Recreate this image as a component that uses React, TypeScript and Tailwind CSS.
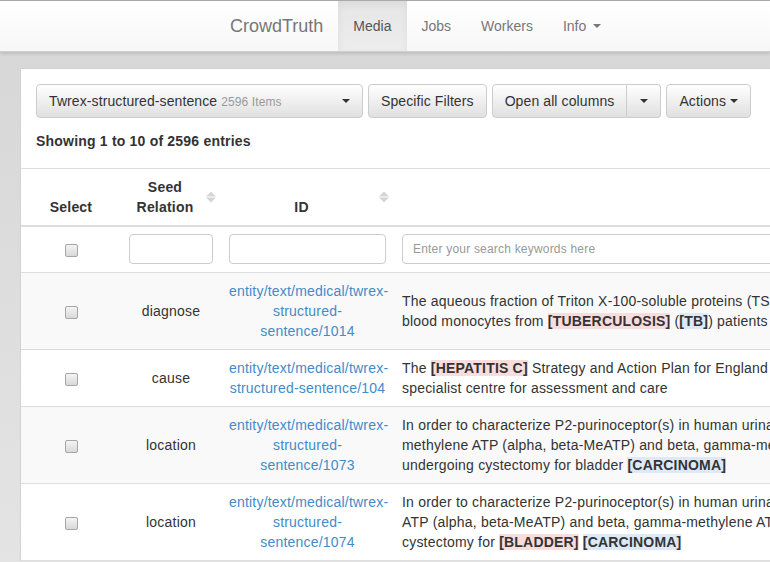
import React from "react";

const font = { fontFamily: '"Liberation Sans", Arial, sans-serif' };

function Caret() {
  return (
    <span className="inline-block w-0 h-0 border-x-[4px] border-t-[4px] border-x-transparent border-t-[#333] align-middle" />
  );
}

function Check() {
  return (
    <span className="inline-block w-[13px] h-[13px] rounded-[2px] border border-[#a6a6a6] bg-gradient-to-b from-[#f4f4f4] to-[#d8d8d8] align-middle" />
  );
}

function SortIcon() {
  return (
    <span className="absolute right-[5px] top-1/2 -translate-y-1/2 flex flex-col items-center gap-[1px]">
      <span className="w-0 h-0 border-x-[5px] border-b-[5px] border-x-transparent border-b-[#d5d5d5]" />
      <span className="w-0 h-0 border-x-[5px] border-t-[5px] border-x-transparent border-t-[#d5d5d5]" />
    </span>
  );
}

function Red({ children }: { children: React.ReactNode }) {
  return <b className="bg-[#f9dcdc] text-[#333]">{children}</b>;
}

function Blue({ children }: { children: React.ReactNode }) {
  return <b className="bg-[#dde9f8] text-[#333]">{children}</b>;
}

const btn =
  "h-[34px] px-3 border border-[#ccc] rounded-[4px] bg-gradient-to-b from-white to-[#e0e0e0] text-[14px] tracking-[0.1px] text-[#333] flex items-center shadow-[0_1px_0_rgba(255,255,255,0.15)]";

export default function App() {
  const rows = [
    {
      rel: "diagnose",
      id: ["entity/text/medical/twrex-", "structured-", "sentence/1014"],
      text: [
        <>The aqueous fraction of Triton X-100-soluble proteins (TSP) from peripheral human</>,
        <>
          blood monocytes from <Red>[TUBERCULOSIS]</Red> (<Blue>[TB]</Blue>) patients and healthy
          controls
        </>,
      ],
    },
    {
      rel: "cause",
      id: ["entity/text/medical/twrex-", "structured-sentence/104"],
      text: [
        <>
          The <Red>[HEPATITIS C]</Red> Strategy and Action Plan for England recommends referral to a
        </>,
        <>specialist centre for assessment and care</>,
      ],
    },
    {
      rel: "location",
      id: ["entity/text/medical/twrex-", "structured-", "sentence/1073"],
      text: [
        <>In order to characterize P2-purinoceptor(s) in human urinary bladder, the effects of alpha, beta-</>,
        <>methylene ATP (alpha, beta-MeATP) and beta, gamma-methylene ATP were studied in patients</>,
        <>
          undergoing cystectomy for bladder <Blue>[CARCINOMA]</Blue>
        </>,
      ],
    },
    {
      rel: "location",
      id: ["entity/text/medical/twrex-", "structured-", "sentence/1074"],
      text: [
        <>In order to characterize P2-purinoceptor(s) in human urinary bladder, the effects of alpha, beta-methylene</>,
        <>ATP (alpha, beta-MeATP) and beta, gamma-methylene ATP were studied in patients undergoing</>,
        <>
          cystectomy for <Red>[BLADDER]</Red> <Blue>[CARCINOMA]</Blue>
        </>,
      ],
    },
  ];

  return (
    <div
      className="w-[770px] h-[562px] overflow-hidden bg-gradient-to-b from-[#d6d6d6] to-[#e4e4e4] text-[14px] leading-[20px] tracking-[0.2px] text-[#333]"
      style={font}
    >
      {/* navbar */}
      <div className="h-[52px] tracking-normal border-t border-[#a8a8a8] border-b border-b-[#cfcfcf] bg-gradient-to-b from-white to-[#f7f7f7] shadow-[0_2px_3px_rgba(0,0,0,0.12)] flex items-stretch pl-[215px]">
        <div className="px-[15px] flex items-center text-[18px] text-[#777]">CrowdTruth</div>
        <div className="px-[15px] flex items-center text-[#555] bg-gradient-to-b from-[#e6e6e6] to-[#ededed] shadow-[inset_0_3px_9px_rgba(0,0,0,0.06)]">
          Media
        </div>
        <div className="px-[15px] flex items-center text-[#777]">Jobs</div>
        <div className="px-[15px] flex items-center text-[#777]">Workers</div>
        <div className="px-[15px] flex items-center gap-[7px] text-[#777]">
          Info
          <span className="inline-block w-0 h-0 border-x-[4px] border-t-[4px] border-x-transparent border-t-[#777]" />
        </div>
      </div>

      {/* panel */}
      <div className="mt-[16px] ml-[20px] w-[900px] bg-white border-l border-t border-[#d2d2d2]">
        <div className="pt-[15px] px-[15px]">
          <div className="flex gap-[5px]">
            <div className={`${btn} w-[327px] justify-between pl-[12px] pr-[12px]`}>
              <span>
                Twrex-structured-sentence <span className="text-[12px] text-[#999]">2596 Items</span>
              </span>
              <Caret />
            </div>
            <div className={btn}>Specific Filters</div>
            <div className="flex">
              <div className={`${btn} rounded-r-none`}>Open all columns</div>
              <div className={`${btn} rounded-l-none border-l-0 w-[34px] justify-center`}>
                <Caret />
              </div>
            </div>
            <div className={`${btn} gap-[4px]`}>
              Actions <Caret />
            </div>
          </div>
          <div className="mt-[13px] font-bold">Showing 1 to 10 of 2596 entries</div>
        </div>

        <table className="mt-[17px] w-full table-fixed border-collapse">
          <colgroup>
            <col className="w-[100px]" />
            <col className="w-[100px]" />
            <col className="w-[173px]" />
            <col />
          </colgroup>
          <thead>
            <tr className="border-t border-[#ddd] border-b-2 border-b-[#ddd]">
              <th className="p-2 align-bottom text-center">Select</th>
              <th className="relative pl-2 pr-[20px] py-2 align-bottom text-center">
                Seed Relation
                <SortIcon />
              </th>
              <th className="relative pl-2 pr-[20px] py-2 align-bottom text-center">
                ID
                <SortIcon />
              </th>
              <th className="p-2"></th>
            </tr>
          </thead>
          <tbody>
            <tr className="border-b border-[#ddd]">
              <td className="px-2 pt-[7px] pb-[8px] text-center align-middle">
                <Check />
              </td>
              <td className="px-2 pt-[7px] pb-[8px]">
                <div className="h-[30px] border border-[#ccc] rounded-[4px]" />
              </td>
              <td className="px-2 pt-[7px] pb-[8px]">
                <div className="h-[30px] border border-[#ccc] rounded-[4px]" />
              </td>
              <td className="px-2 pt-[7px] pb-[8px]">
                <div className="h-[30px] border border-[#ccc] rounded-[4px] px-[10px] flex items-center text-[12px] text-[#999]">
                  Enter your search keywords here
                </div>
              </td>
            </tr>
            {rows.map((row, i) => (
              <tr key={i} className={`border-b border-[#ddd] ${i % 2 === 0 ? "bg-[#f9f9f9]" : "bg-white"}`}>
                <td className="p-2 text-center align-middle">
                  <Check />
                </td>
                <td className="p-2 text-center align-middle">{row.rel}</td>
                <td className="p-2 text-center align-middle text-[#428bca]">
                  {row.id.map((l, j) => (
                    <div key={j}>{l}</div>
                  ))}
                </td>
                <td className="p-2 align-middle overflow-hidden">
                  {row.text.map((l, j) => (
                    <div key={j} className="whitespace-nowrap">
                      {l}
                    </div>
                  ))}
                </td>
              </tr>
            ))}
          </tbody>
        </table>
      </div>
    </div>
  );
}
